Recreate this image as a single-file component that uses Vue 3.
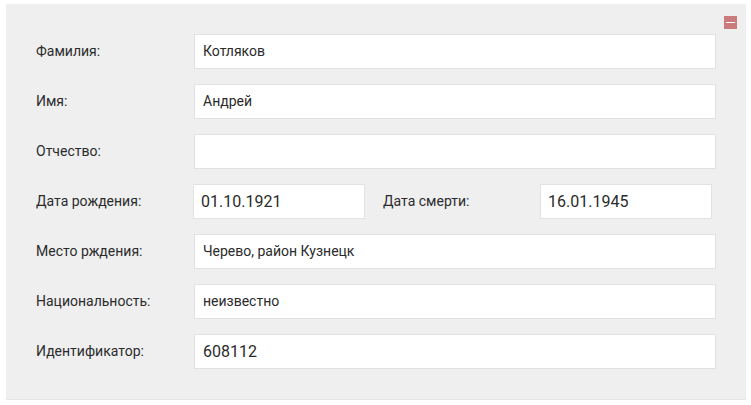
<script setup>
import { reactive } from 'vue'

const person = reactive({
  surname: 'Котляков',
  name: 'Андрей',
  patronymic: '',
  birthDate: '01.10.1921',
  deathDate: '16.01.1945',
  birthPlace: 'Черево, район Кузнецк',
  nationality: 'неизвестно',
  identifier: '608112'
})

const rows = [
  { fields: [{ key: 'surname', label: 'Фамилия:' }] },
  { fields: [{ key: 'name', label: 'Имя:' }] },
  { fields: [{ key: 'patronymic', label: 'Отчество:' }] },
  {
    fields: [
      { key: 'birthDate', label: 'Дата рождения:', numeric: true },
      { key: 'deathDate', label: 'Дата смерти:', numeric: true }
    ]
  },
  { fields: [{ key: 'birthPlace', label: 'Место рждения:' }] },
  { fields: [{ key: 'nationality', label: 'Национальность:' }] },
  { fields: [{ key: 'identifier', label: 'Идентификатор:', numeric: true }] }
]
</script>

<template>
  <form class="panel" @submit.prevent>
    <button class="remove" type="button" aria-label="Удалить">
      <svg viewBox="0 0 13 13" width="13" height="13" aria-hidden="true">
        <path d="M2 6.5H11" stroke="#fff" stroke-width="1" />
      </svg>
    </button>
    <div
      v-for="row in rows"
      :key="row.fields[0].key"
      class="row"
      :class="{ dates: row.fields.length > 1 }"
    >
      <div v-for="field in row.fields" :key="field.key" class="field">
        <label :for="field.key">{{ field.label }}</label>
        <input
          :id="field.key"
          v-model="person[field.key]"
          type="text"
          :class="{ numeric: field.numeric }"
        />
      </div>
    </div>
  </form>
</template>

<style>
body {
  margin: 0;
  background: #fff;
}
</style>

<style scoped>
.panel {
  position: relative;
  display: flex;
  flex-direction: column;
  gap: 15px;
  margin: 4px 5px 4px 6px;
  padding: 30px;
  background: #efeff0;
  border-bottom: 1px solid #e6e6e7;
  color: #2b2b2b;
  font: 14px/20px Roboto, "Noto Sans", sans-serif;
}

.remove {
  position: absolute;
  top: 12px;
  right: 9px;
  display: flex;
  padding: 0;
  border: 0;
  background: #cb7b7b;
  cursor: pointer;
}

.row {
  display: flex;
  gap: 18px;
}

.field {
  flex: 1;
  min-width: 0;
  display: flex;
  align-items: center;
}

label {
  flex: 0 0 158px;
  padding-bottom: 1px;
}

input {
  box-sizing: border-box;
  flex: 1;
  min-width: 0;
  height: 35px;
  padding: 0 8px 1px;
  border: 1px solid #e2e2e5;
  border-radius: 0;
  outline: 0;
  background: #fff;
  color: inherit;
  font: inherit;
}

.numeric {
  font-size: 16px;
}

.dates {
  padding-right: 4px;
}

.dates label {
  flex-basis: 157px;
}

.dates input {
  padding: 0 7px 1px;
}
</style>
